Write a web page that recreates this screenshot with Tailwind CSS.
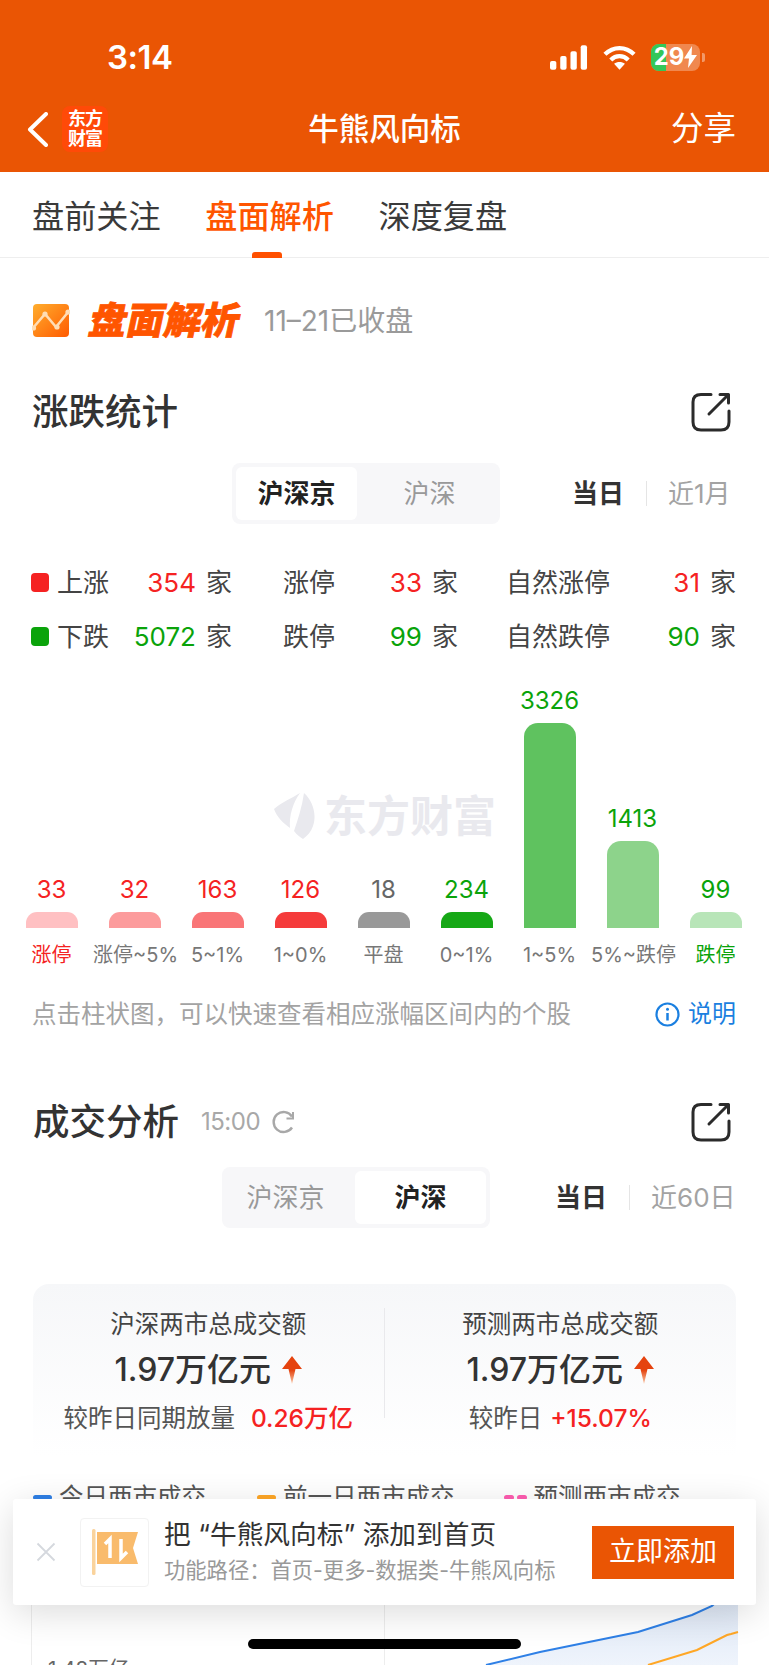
<!DOCTYPE html>
<html lang="zh">
<head>
<meta charset="utf-8">
<script src="https://cdn.jsdelivr.net/npm/@tailwindcss/browser@4"></script>
</head>
<body class="relative w-[769px] h-[1665px] overflow-hidden bg-white text-[#333] font-['Inter','Noto_Sans_CJK_SC',sans-serif]">

<header class="h-[172px] bg-[#EA5504] text-white">
  <div class="h-[98px] flex justify-between pl-[107px] pr-[69px] pt-[40px]">
    <span class="text-[33px] leading-[34px] font-semibold tracking-[-0.5px]">3:14</span>
    <div class="relative flex items-center h-[34px] gap-[15px]">
      <svg width="38" height="25" viewBox="0 0 39 25" fill="#fff"><rect x="0" y="16" width="6.5" height="9" rx="2"/><rect x="10.5" y="11" width="6.5" height="14" rx="2"/><rect x="21" y="6" width="6.5" height="19" rx="2"/><rect x="31.5" y="0" width="6.5" height="25" rx="2"/></svg>
      <svg width="33" height="25" viewBox="0 0 34 25" fill="none" stroke="#fff" stroke-width="4.4"><path d="M2 9.2C10.5 .6 23.5 .6 32 9.2"/><path d="M8 15C13.2 9.800 20.800 9.800 26 15"/><path d="M17 25l-5.600-6c3.200-2.600 8-2.600 11.200 0z" fill="#fff" stroke="none"/></svg>
      <div class="relative w-[49px] h-[27px] rounded-[8px] overflow-hidden bg-white/30 flex items-center justify-center">
        <div class="absolute left-0 top-0 bottom-0 w-[15px] bg-[#34C759]"></div>
        <span class="relative text-[24px] leading-none font-bold">29</span>
        <svg class="relative" width="13" height="22" viewBox="0 0 13 22" fill="#fff"><path d="M8 0L0 12.500h5L4 22l9-13H7.600z"/></svg>
      </div>
      <i class="absolute right-[-5px] top-[13px] w-[3px] h-[9px] rounded-r-[2px] bg-white/40"></i>
    </div>
  </div>
  <div class="h-[62px] grid grid-cols-[1fr_auto_1fr] items-center pl-[27px] pr-[27px]">
    <div class="flex items-center gap-[14px]">
      <svg width="21" height="35" viewBox="0 0 21 35" fill="none" stroke="#fff" stroke-width="4" stroke-linecap="round" stroke-linejoin="round"><path d="M19 2L3 17.500 19 33"/></svg>
      <div class="w-[46px] h-[46px] rounded-[8px] bg-[#FF4A08] flex flex-col items-center justify-center text-[18px] leading-[20px] font-bold tracking-[-1px]"><span>东方</span><span>财富</span></div>
    </div>
    <h1 class="text-[30.5px] leading-[40px] font-medium">牛熊风向标</h1>
    <div class="text-right text-[32.5px] leading-[40px] mr-[6px]">分享</div>
  </div>
</header>

<nav class="relative h-[86px] border-b border-[#EEEEEE] flex items-start gap-[44.500px] pl-[32px] pt-[25px] text-[32.2px] leading-[40px] text-[#3a3a3a]">
  <span>盘前关注</span>
  <span class="text-[#FF5500] font-medium">盘面解析</span>
  <span>深度复盘</span>
  <div class="absolute left-[252px] bottom-[-1px] w-[30px] h-[6px] rounded-t-[3px] bg-[#FF5000]"></div>
</nav>

<main>
  <section class="mt-[46px] h-[34px] pl-[32px] flex items-center">
    <svg width="38" height="34" viewBox="0 0 38 34"><defs><linearGradient id="g1" x1="0" y1="0" x2="1" y2="1"><stop offset="0" stop-color="#FFAE2E"/><stop offset="1" stop-color="#FF5A00"/></linearGradient></defs><rect x="1" y="0" width="36" height="33" rx="4" fill="url(#g1)"/><path d="M1 24L13 10l11 13L37 7" fill="none" stroke="#FFDDB5" stroke-width="2.500"/><circle cx="1.500" cy="24" r="2.600" fill="#FFDDB5"/><circle cx="13" cy="10" r="2.600" fill="#FFDDB5"/><circle cx="25" cy="23" r="2.600" fill="#FFDDB5"/><circle cx="36" cy="8" r="2.600" fill="#FFDDB5"/></svg>
    <span class="ml-[20px] text-[37.5px] leading-[40px] font-black text-[#FF5500] -skew-x-12 [-webkit-text-stroke:0.8px_#FF5500]">盘面解析</span>
    <span class="ml-[24px] text-[28px] leading-[34px] text-[#9a9a9a]">11–21已收盘</span>
  </section>

  <section class="mt-[54px] h-[40px] pl-[32px] pr-[38px] flex items-center justify-between">
    <h2 class="text-[36.5px] leading-[40px] font-medium">涨跌统计</h2>
    <svg width="40" height="40" viewBox="0 0 40 40" fill="none" stroke="#2b2b2b" stroke-width="3" stroke-linecap="round" stroke-linejoin="round"><path d="M20 2.500H10Q2 2.500 2 10V30Q2 38 10 38H30Q38 38 38 30V19"/><path d="M18 22L37 3"/><path d="M29 2.500h8.500V11"/></svg>
  </section>

  <section class="mt-[31px] h-[61px] pl-[232px] flex items-center text-[26px]">
    <div class="w-[268px] h-[61px] p-[4px] rounded-[8px] bg-[#F7F7F9] flex items-stretch">
      <div class="w-[121px] bg-white rounded-[6px] font-bold text-[#222] flex items-center justify-center">沪深京</div>
      <div class="flex-1 pl-[6px] text-[#999] flex items-center justify-center">沪深</div>
    </div>
    <span class="ml-[72px] font-bold text-[#333]">当日</span>
    <span class="ml-[22px] w-px h-[25px] bg-[#E5E5E5]"></span>
    <span class="ml-[21px] text-[#A3A3A3]">近1月</span>
  </section>

  <section class="mt-[31px] pl-[31px] pr-[33px] text-[26px] text-[#444]">
    <div class="h-[54px] flex items-center">
      <div class="w-[201px] flex items-center"><i class="w-[18px] h-[19px] rounded-[4px] bg-[#F52222]"></i><span class="ml-[8px]">上涨</span><b class="ml-auto font-normal text-[#F52222]">354</b><span class="ml-[10px]">家</span></div>
      <div class="ml-[51px] w-[175px] flex items-center"><span>涨停</span><b class="ml-auto font-normal text-[#F52222]">33</b><span class="ml-[10px]">家</span></div>
      <div class="ml-auto w-[230px] flex items-center"><span>自然涨停</span><b class="ml-auto font-normal text-[#F52222]">31</b><span class="ml-[10px]">家</span></div>
    </div>
    <div class="h-[54px] flex items-center">
      <div class="w-[201px] flex items-center"><i class="w-[18px] h-[19px] rounded-[4px] bg-[#0AA30A]"></i><span class="ml-[8px]">下跌</span><b class="ml-auto font-normal text-[#0AA30A]">5072</b><span class="ml-[10px]">家</span></div>
      <div class="ml-[51px] w-[175px] flex items-center"><span>跌停</span><b class="ml-auto font-normal text-[#0AA30A]">99</b><span class="ml-[10px]">家</span></div>
      <div class="ml-auto w-[230px] flex items-center"><span>自然跌停</span><b class="ml-auto font-normal text-[#0AA30A]">90</b><span class="ml-[10px]">家</span></div>
    </div>
  </section>

  <section class="relative">
    <div class="absolute left-[274px] top-[130px] flex items-center gap-[8px] text-[43px] leading-[46px] font-bold text-[#E9E9EE]">
      <svg width="42" height="46" viewBox="0 0 42 46" fill="#E9E9EE"><path d="M0 16C8 9 18 5 26 0 19 10 15 22 16 35 9 30 3 24 0 16z"/><path d="M30 0C39 8 43 22 39 33 37 39 33 43 29 46 26 44 23 42 20 38 24 26 28 14 30 0z"/></svg>
      <span>东方财富</span>
    </div>
    <div class="relative h-[265px] px-[10px] grid grid-cols-[repeat(9,83px)] items-end text-[24px] text-center">
      <div class="flex flex-col items-center"><span class="h-[30px] leading-[30px] mb-[7px] text-[#F52222]">33</span><div class="w-[52px] h-[16px] rounded-t-[11px] bg-[#FFC0C2]"></div></div>
      <div class="flex flex-col items-center"><span class="h-[30px] leading-[30px] mb-[7px] text-[#F52222]">32</span><div class="w-[52px] h-[16px] rounded-t-[11px] bg-[#FC9B9C]"></div></div>
      <div class="flex flex-col items-center"><span class="h-[30px] leading-[30px] mb-[7px] text-[#F52222]">163</span><div class="w-[52px] h-[16px] rounded-t-[11px] bg-[#F97577]"></div></div>
      <div class="flex flex-col items-center"><span class="h-[30px] leading-[30px] mb-[7px] text-[#F52222]">126</span><div class="w-[52px] h-[16px] rounded-t-[11px] bg-[#F53B3B]"></div></div>
      <div class="flex flex-col items-center"><span class="h-[30px] leading-[30px] mb-[7px] text-[#666]">18</span><div class="w-[52px] h-[16px] rounded-t-[11px] bg-[#999999]"></div></div>
      <div class="flex flex-col items-center"><span class="h-[30px] leading-[30px] mb-[7px] text-[#0AA30A]">234</span><div class="w-[52px] h-[16px] rounded-t-[11px] bg-[#16A816]"></div></div>
      <div class="flex flex-col items-center"><span class="h-[30px] leading-[30px] mb-[7px] text-[#0AA30A]">3326</span><div class="w-[52px] h-[205px] rounded-t-[14px] bg-[#5FC25F]"></div></div>
      <div class="flex flex-col items-center"><span class="h-[30px] leading-[30px] mb-[7px] text-[#0AA30A]">1413</span><div class="w-[52px] h-[87px] rounded-t-[14px] bg-[#8DD38B]"></div></div>
      <div class="flex flex-col items-center"><span class="h-[30px] leading-[30px] mb-[7px] text-[#0AA30A]">99</span><div class="w-[52px] h-[16px] rounded-t-[11px] bg-[#B8E5B8]"></div></div>
    </div>
    <div class="mt-[12px] h-[30px] px-[10px] grid grid-cols-[repeat(9,83px)] items-center text-[20px] leading-[30px] text-center text-[#777] whitespace-nowrap">
      <span class="text-[#F52222]">涨停</span><span>涨停~5%</span><span>5~1%</span><span>1~0%</span><span>平盘</span><span>0~1%</span><span>1~5%</span><span>5%~跌停</span><span class="text-[#0AA30A]">跌停</span>
    </div>
  </section>

  <section class="mt-[27px] h-[34px] pl-[32px] pr-[33px] flex items-center justify-between">
    <span class="text-[24.500px] leading-[34px] text-[#A3A3A3]">点击柱状图，可以快速查看相应涨幅区间内的个股</span>
    <span class="flex items-center gap-[8px] text-[24px] text-[#1A7FE0]">
      <svg width="25" height="25" viewBox="0 0 25 25" fill="none" stroke="#1A7FE0" stroke-width="2.200"><circle cx="12.500" cy="12.500" r="11"/><path d="M12.500 11v7.500" stroke-width="2.500"/><circle cx="12.500" cy="7.200" r="1.500" fill="#1A7FE0" stroke="none"/></svg>说明
    </span>
  </section>

  <section class="mt-[71px] h-[40px] pl-[33px] pr-[38px] flex items-center">
    <h2 class="text-[36.5px] leading-[40px] font-medium">成交分析</h2>
    <span class="ml-[22px] text-[24px] text-[#A8A8A8] tracking-[-0.5px]">15:00</span>
    <svg class="ml-[12px]" width="24" height="24" viewBox="0 0 24 24" fill="none" stroke="#A8A8A8" stroke-width="2.400"><path d="M20 17.500A10 10 0 1 1 20 6.500"/><path d="M21 2v6.500h-6.500" stroke-width="2"/></svg>
    <svg class="ml-auto" width="40" height="40" viewBox="0 0 40 40" fill="none" stroke="#2b2b2b" stroke-width="3" stroke-linecap="round" stroke-linejoin="round"><path d="M20 2.500H10Q2 2.500 2 10V30Q2 38 10 38H30Q38 38 38 30V19"/><path d="M18 22L37 3"/><path d="M29 2.500h8.500V11"/></svg>
  </section>

  <section class="mt-[25px] h-[61px] pl-[222px] flex items-center text-[26px]">
    <div class="w-[268px] h-[61px] p-[4px] rounded-[8px] bg-[#F7F7F9] flex items-stretch">
      <div class="w-[129px] pr-[10px] text-[#999] flex items-center justify-center">沪深京</div>
      <div class="flex-1 bg-white rounded-[6px] font-bold text-[#222] flex items-center justify-center">沪深</div>
    </div>
    <span class="ml-[65px] font-bold text-[#333]">当日</span>
    <span class="ml-[22px] w-px h-[25px] bg-[#E5E5E5]"></span>
    <span class="ml-[21px] text-[#A3A3A3]">近60日</span>
  </section>

  <section class="mt-[56px] mx-[33px] h-[172px] rounded-t-[16px] bg-linear-to-b from-[#F6F7F9] to-white pt-[24px] grid grid-cols-2 text-center">
    <div class="flex flex-col items-center border-r border-[#E9E9EC] h-[110px]">
      <span class="text-[24.500px] leading-[32px] text-[#444]">沪深两市总成交额</span>
      <div class="mt-[7px] h-[46px] flex items-center gap-[11px] text-[32px] font-medium"><span>1.97万亿元</span>
        <svg width="20" height="28" viewBox="0 0 20 28"><defs><linearGradient id="g2" x1="0" y1="0" x2="0" y2="1"><stop offset="0" stop-color="#E5430F"/><stop offset="0.5" stop-color="#E5430F"/><stop offset="1" stop-color="#F9C9A8"/></linearGradient></defs><path d="M10 0l10 13h-6.500L10 28 6.500 13H0z" fill="url(#g2)"/></svg>
      </div>
      <div class="mt-[8px] text-[24.500px] leading-[34px] text-[#555] whitespace-nowrap">较昨日同期放量<span class="ml-[16px] text-[#F52222] font-medium">0.26万亿</span></div>
    </div>
    <div class="flex flex-col items-center h-[110px]">
      <span class="text-[24.500px] leading-[32px] text-[#444]">预测两市总成交额</span>
      <div class="mt-[7px] h-[46px] flex items-center gap-[11px] text-[32px] font-medium"><span>1.97万亿元</span>
        <svg width="20" height="28" viewBox="0 0 20 28"><path d="M10 0l10 13h-6.500L10 28 6.500 13H0z" fill="url(#g2)"/></svg>
      </div>
      <div class="mt-[8px] text-[24.500px] leading-[34px] text-[#555] whitespace-nowrap">较昨日<span class="ml-[8px] text-[#F52222] font-medium">+15.07%</span></div>
    </div>
  </section>

  <section class="mt-[26px] h-[30px] pl-[33px] flex items-center text-[24.500px] text-[#555]">
    <i class="w-[19px] h-[5px] rounded-full bg-[#2F80E6]"></i><span class="ml-[7px]">今日两市成交</span>
    <i class="ml-[51px] w-[19px] h-[5px] rounded-full bg-[#FFA726]"></i><span class="ml-[7px]">前一日两市成交</span>
    <i class="ml-[49px] w-[10px] h-[5px] rounded-full bg-[#FF5DB1]"></i><i class="ml-[3px] w-[10px] h-[5px] rounded-full bg-[#FF5DB1]"></i><span class="ml-[7px]">预测两市成交</span>
  </section>

  <svg class="ml-[31px]" width="708" height="153" viewBox="0 0 708 153">
    <defs><linearGradient id="g3" x1="0" y1="0" x2="0" y2="1"><stop offset="0" stop-color="#D8E3F3"/><stop offset="1" stop-color="#EFF4FC"/></linearGradient></defs>
    <path d="M.5 0V153M353.500 0V153" stroke="#EDEDED"/>
    <path d="M455 153L509 140 553 131 607 120 661 103 681 94 707 70V153z" fill="url(#g3)"/>
    <path d="M455 153L509 140 553 131 607 120 661 103 681 94 707 70" fill="none" stroke="#2F80E6" stroke-width="2"/>
    <path d="M617 153L666 138 696 123 700 122 707 120" fill="none" stroke="#FFA726" stroke-width="2"/>
    <text x="17" y="164" font-size="20.5" fill="#666">1.48万亿</text>
  </svg>
</main>

<aside class="absolute left-[13px] top-[1499px] w-[743px] h-[106px] rounded-[3px] bg-white shadow-[0_8px_36px_rgba(0,0,0,0.14)] flex items-center">
  <svg class="ml-[23px]" width="20" height="20" viewBox="0 0 20 20" stroke="#D5D8DE" stroke-width="1.800"><path d="M1.500 1.500l17 17M18.500 1.500l-17 17"/></svg>
  <div class="ml-[24px] w-[69px] h-[69px] rounded-[4px] border border-[#F2F2F2] flex items-center justify-center">
    <svg width="46" height="46" viewBox="0 0 46 46"><rect x="0" y="0" width="3.500" height="46" rx="1.500" fill="#FAD39C"/><path d="M5 3H46L41 19 46 35H5z" fill="#F9BB6C"/><path d="M18 29V10l-5 5" fill="none" stroke="#fff" stroke-width="3.500"/><path d="M29 10v19l6-6" fill="none" stroke="#fff" stroke-width="3.500"/></svg>
  </div>
  <div class="ml-[15px] flex-1">
    <div class="text-[26.700px] leading-[36px] text-[#333] whitespace-nowrap">把 “牛熊风向标” 添加到首页</div>
    <div class="text-[21.300px] leading-[36px] text-[#999] whitespace-nowrap">功能路径：首页-更多-数据类-牛熊风向标</div>
  </div>
  <div class="mr-[22px] w-[142px] h-[53px] bg-[#EA5504] text-white text-[27px] flex items-center justify-center">立即添加</div>
</aside>

<div class="absolute left-[248px] top-[1639px] w-[273px] h-[10px] rounded-full bg-black"></div>
</body>
</html>
